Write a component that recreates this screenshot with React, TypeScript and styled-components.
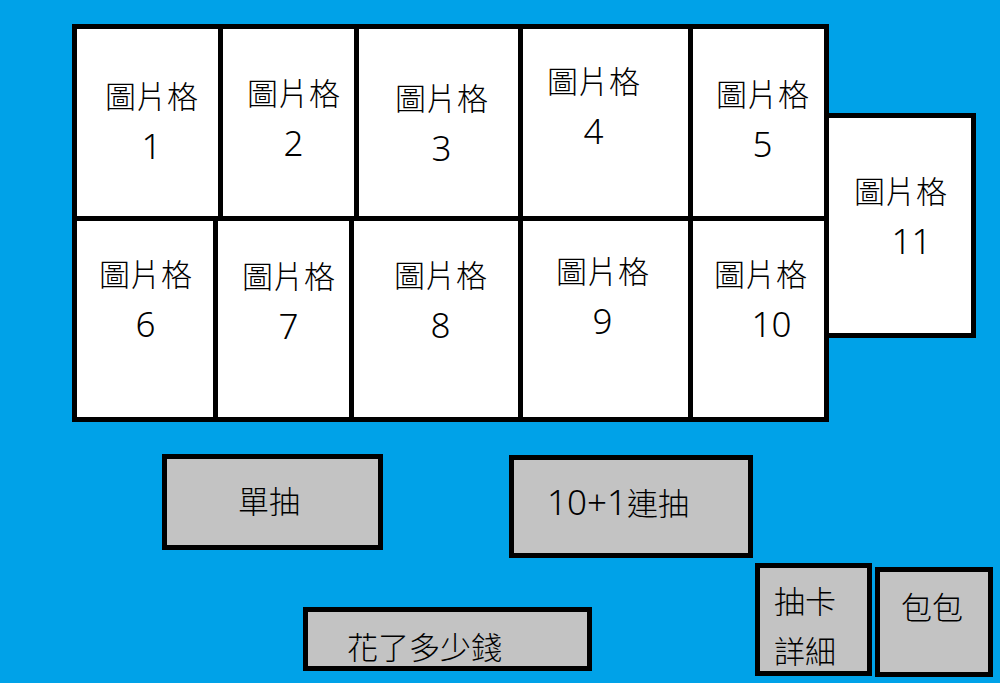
import styled, { createGlobalStyle } from 'styled-components';

const GlobalStyle = createGlobalStyle`
  html, body {
    margin: 0;
    padding: 0;
    background: #00a2e8;
  }
  body {
    font-family: "Noto Sans CJK TC", "Noto Sans", sans-serif;
    font-weight: 300;
    color: #000;
  }
`;

const Page = styled.div`
  width: 1000px;
  height: 683px;
  box-sizing: border-box;
  padding: 24px 0 0 72px;
  background: #00a2e8;
  overflow: hidden;
`;

const TopArea = styled.div`
  display: flex;
  align-items: flex-start;
`;

const Grid = styled.div`
  width: 757px;
  height: 398px;
  box-sizing: border-box;
  border: 5px solid #000;
  background: #fff;
  display: flex;
  flex-direction: column;
`;

const GridRow = styled.div<{ $h: number; $divider?: boolean }>`
  display: flex;
  height: ${p => p.$h}px;
  box-sizing: border-box;
  border-bottom: ${p => (p.$divider ? '5px solid #000' : 'none')};
`;

const Cell = styled.div<{ $w: number; $first?: boolean; $dx: number; $dy: number }>`
  width: ${p => p.$w}px;
  flex: none;
  box-sizing: border-box;
  border-left: ${p => (p.$first ? 'none' : '5px solid #000')};
  padding: ${p => p.$dy}px 0 0 ${p => p.$dx}px;
  background: #fff;
`;

const SideCell = styled.div<{ $dx: number; $dy: number }>`
  width: 147px;
  height: 225px;
  margin-top: 89px;
  box-sizing: border-box;
  border: 5px solid #000;
  border-left: none;
  background: #fff;
  padding: ${p => p.$dy}px 0 0 ${p => p.$dx}px;
`;

const Caption = styled.div`
  display: inline-flex;
  flex-direction: column;
  align-items: center;
`;

const Label = styled.span`
  font-size: 31px;
  line-height: 31px;
  white-space: nowrap;
`;

const Num = styled.span<{ $shift?: number }>`
  font-family: "Noto Sans", sans-serif;
  font-weight: 300;
  font-size: 35px;
  line-height: 35px;
  margin-top: 18px;
  margin-left: ${p => (p.$shift ?? 0) * 2}px;
`;

const ButtonArea = styled.div`
  display: flex;
  flex-direction: column;
`;

const ButtonRow = styled.div<{ $mt: number }>`
  display: flex;
  align-items: flex-start;
  margin-top: ${p => p.$mt}px;
`;

const GrayButton = styled.div<{
  $w: number;
  $h: number;
  $ml: number;
  $mt?: number;
  $pl: number;
  $pt: number;
}>`
  width: ${p => p.$w}px;
  height: ${p => p.$h}px;
  flex: none;
  box-sizing: border-box;
  margin: ${p => p.$mt ?? 0}px 0 0 ${p => p.$ml}px;
  padding: ${p => p.$pt}px 0 0 ${p => p.$pl}px;
  border: 5px solid #000;
  background: #c3c3c3;
  display: flex;
  flex-direction: column;
  gap: 19px;
  font-size: 31px;
  line-height: 31px;
  white-space: nowrap;
`;

const Digits = styled.span`
  font-family: "Noto Sans", sans-serif;
  font-weight: 300;
  font-size: 35px;
`;

type CellData = { num: string; w: number; dx: number; dy: number; shift?: number };

const topRow: CellData[] = [
  { num: '1', w: 141, dx: 28, dy: 50 },
  { num: '2', w: 136, dx: 24, dy: 47 },
  { num: '3', w: 164, dx: 36, dy: 52 },
  { num: '4', w: 170, dx: 24, dy: 35 },
  { num: '5', w: 136, dx: 23, dy: 48 },
];

const bottomRow: CellData[] = [
  { num: '6', w: 136, dx: 22, dy: 36 },
  { num: '7', w: 136, dx: 24, dy: 38 },
  { num: '8', w: 169, dx: 40, dy: 37 },
  { num: '9', w: 170, dx: 33, dy: 33 },
  { num: '10', w: 136, dx: 21, dy: 36, shift: 11 },
];

const PictureCaption = ({ num, shift }: { num: string; shift?: number }) => (
  <Caption>
    <Label>圖片格</Label>
    <Num $shift={shift}>{num}</Num>
  </Caption>
);

const renderRow = (cells: CellData[]) =>
  cells.map((c, i) => (
    <Cell key={c.num} $w={c.w} $first={i === 0} $dx={c.dx} $dy={c.dy}>
      <PictureCaption num={c.num} shift={c.shift} />
    </Cell>
  ));

const App = () => {
  return (
    <>
      <GlobalStyle />
      <Page>
        <TopArea>
          <Grid>
            <GridRow $h={192} $divider>{renderRow(topRow)}</GridRow>
            <GridRow $h={196}>{renderRow(bottomRow)}</GridRow>
          </Grid>
          <SideCell $dx={25} $dy={56}>
            <PictureCaption num="11" shift={11} />
          </SideCell>
        </TopArea>
        <ButtonArea>
          <ButtonRow $mt={32}>
            <GrayButton $w={221} $h={96} $ml={90} $pl={71} $pt={25}>
              單抽
            </GrayButton>
            <GrayButton $w={244} $h={103} $ml={126} $mt={1} $pl={33} $pt={26}>
              <span>
                <Digits>10+1</Digits>連抽
              </span>
            </GrayButton>
          </ButtonRow>
          <ButtonRow $mt={0}>
            <GrayButton $w={289} $h={64} $ml={231} $mt={49} $pl={39} $pt={18}>
              花了多少錢
            </GrayButton>
            <GrayButton $w={117} $h={113} $ml={163} $mt={5} $pl={14} $pt={16}>
              <span>抽卡</span>
              <span>詳細</span>
            </GrayButton>
            <GrayButton $w={118} $h={110} $ml={3} $mt={9} $pl={21} $pt={18}>
              包包
            </GrayButton>
          </ButtonRow>
        </ButtonArea>
      </Page>
    </>
  );
};

export default App;
